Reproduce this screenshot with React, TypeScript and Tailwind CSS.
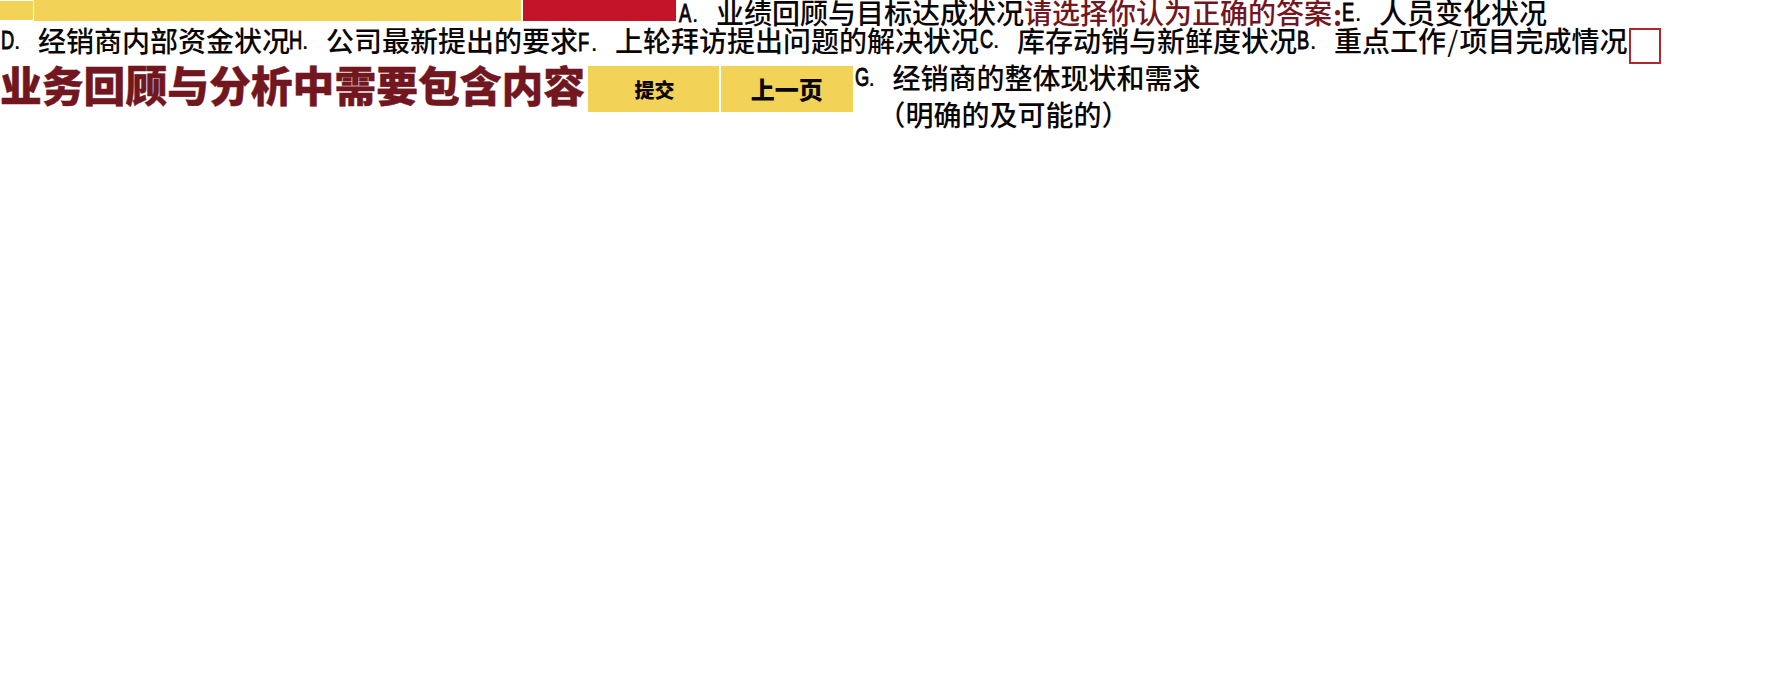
type OptionProps = {
  letter: string;
  width: string;
  shift?: string;
  children: React.ReactNode;
};

function Option({ letter, width, shift = '', children }: OptionProps) {
  return (
    <div className={`flex shrink-0 text-[#0a0606] ${width}`}>
      <div className={`flex w-[38px] shrink-0 font-['Liberation_Sans',sans-serif] text-[26.5px] ${shift}`}>
        <span className="ml-[0.5px] block w-[13px] origin-left scale-x-[0.69] [-webkit-text-stroke:1px]">{letter}</span>
        <span className="block">.</span>
      </div>
      <div className="whitespace-nowrap">{children}</div>
    </div>
  );
}

export default function App() {
  return (
    <main className="h-[692px] w-full overflow-hidden bg-white font-['Noto_Sans_CJK_SC',sans-serif] text-[28px] leading-[24px] font-medium">
      <div className="flex h-[28px]">
        <div className="mt-px mr-[1px] h-[18.5px] w-[33px] shrink-0 bg-[#f2d257]" />
        <div className="mr-[2px] h-[20.5px] w-[487px] shrink-0 bg-[#f2d257]" />
        <div className="mr-[2px] h-[20.5px] w-[153px] shrink-0 bg-[#c41429]" />
        <div className="flex">
          <Option letter="A" width="w-[346px]" shift="mt-px">业绩回顾与目标达成状况</Option>
          <div className="flex w-[317px] shrink-0 whitespace-nowrap text-[#721620]">
            <span>请选择你认为正确的答案</span>
            <span className="pt-[2px] pl-px font-bold">:</span>
          </div>
          <Option letter="E" width="w-[206px]">人员变化状况</Option>
        </div>
      </div>
      <div className="flex h-[38px]">
        <div className="flex">
          <Option letter="D" width="w-[288px]">经销商内部资金状况</Option>
          <Option letter="H" width="w-[289px]">公司最新提出的要求</Option>
          <Option letter="F" width="w-[402px]" shift="mt-[2px]">上轮拜访提出问题的解决状况</Option>
          <Option letter="C" width="w-[317px]" shift="-mt-px">库存动销与新鲜度状况</Option>
          <Option letter="B" width="w-[333px]">
            重点工作<span className="px-[1.3px] font-normal">/</span>项目完成情况
          </Option>
        </div>
        <div className="h-[36px] w-[32px] shrink-0 border-2 border-[#b0272d]" />
      </div>
      <div className="flex">
        <h1 className="-mt-px w-[587.5px] shrink-0 whitespace-nowrap text-[41.8px] leading-[38px] font-black text-[#721620] [-webkit-text-stroke:0.4px]">
          业务回顾与分析中需要包含内容
        </h1>
        <button className="mr-[2.5px] flex h-[45.5px] w-[131px] shrink-0 items-center justify-center bg-[#f2d257] pt-[2px] pl-[3px] text-[20px] font-black text-[#0a0606]">
          提交
        </button>
        <button className="mr-[2px] flex h-[45.5px] w-[131.5px] shrink-0 items-center justify-center bg-[#f2d257] text-[24px] font-black text-[#0a0606]">
          上一页
        </button>
        <div className="-mt-px">
          <Option letter="G" width="w-[360px]">
            <p>经销商的整体现状和需求</p>
            <p className="-ml-[15px] pt-[13px]">（明确的及可能的）</p>
          </Option>
        </div>
      </div>
    </main>
  );
}
